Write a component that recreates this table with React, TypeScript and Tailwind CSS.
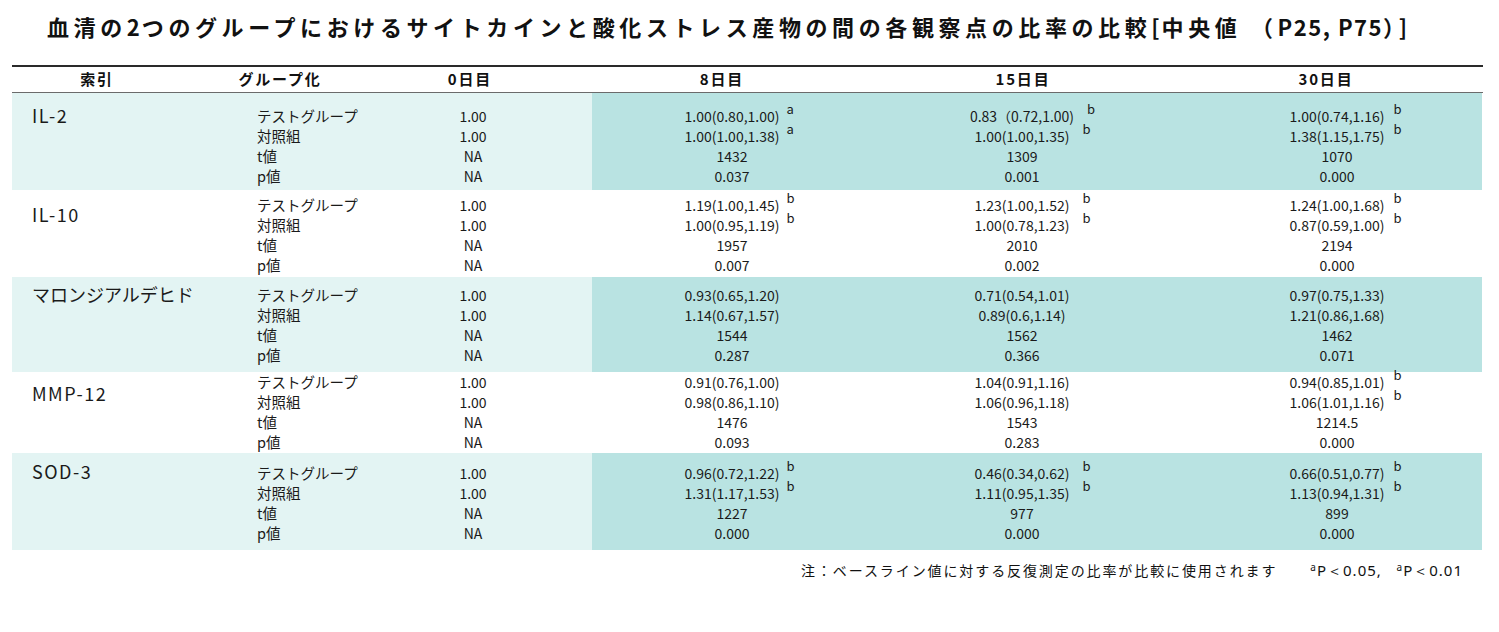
import React from 'react'

type Cell = string | [string, string]

interface Block {
  name: string
  latin: boolean
  height: string
  rowPad: string
  namePad: string
  shaded: boolean
  day0: string[]
  cols: Cell[][]
}

const GROUPS = ['テストグループ', '対照組', 't値', 'p値']

const BLOCKS: Block[] = [
  {
    name: 'IL-2',
    latin: true,
    height: 'h-[97px]',
    rowPad: 'pt-[13px]',
    namePad: 'pt-[9px]',
    shaded: true,
    day0: ['1.00', '1.00', 'NA', 'NA'],
    cols: [
      [['1.00(0.80,1.00)', 'a'], ['1.00(1.00,1.38)', 'a'], '1432', '0.037'],
      [['0.83（0.72,1.00)', 'b'], ['1.00(1.00,1.35)', 'b'], '1309', '0.001'],
      [['1.00(0.74,1.16)', 'b'], ['1.38(1.15,1.75)', 'b'], '1070', '0.000'],
    ],
  },
  {
    name: 'IL-10',
    latin: true,
    height: 'h-[87px]',
    rowPad: 'pt-[5px]',
    namePad: 'pt-[11px]',
    shaded: false,
    day0: ['1.00', '1.00', 'NA', 'NA'],
    cols: [
      [['1.19(1.00,1.45)', 'b'], ['1.00(0.95,1.19)', 'b'], '1957', '0.007'],
      [['1.23(1.00,1.52)', 'b'], ['1.00(0.78,1.23)', 'b'], '2010', '0.002'],
      [['1.24(1.00,1.68)', 'b'], ['0.87(0.59,1.00)', 'b'], '2194', '0.000'],
    ],
  },
  {
    name: 'マロンジアルデヒド',
    latin: false,
    height: 'h-[95px]',
    rowPad: 'pt-[8px]',
    namePad: 'pt-[4px]',
    shaded: true,
    day0: ['1.00', '1.00', 'NA', 'NA'],
    cols: [
      ['0.93(0.65,1.20)', '1.14(0.67,1.57)', '1544', '0.287'],
      ['0.71(0.54,1.01)', '0.89(0.6,1.14)', '1562', '0.366'],
      ['0.97(0.75,1.33)', '1.21(0.86,1.68)', '1462', '0.071'],
    ],
  },
  {
    name: 'MMP-12',
    latin: true,
    height: 'h-[81px]',
    rowPad: 'pt-[0px]',
    namePad: 'pt-[8px]',
    shaded: false,
    day0: ['1.00', '1.00', 'NA', 'NA'],
    cols: [
      ['0.91(0.76,1.00)', '0.98(0.86,1.10)', '1476', '0.093'],
      ['1.04(0.91,1.16)', '1.06(0.96,1.18)', '1543', '0.283'],
      [['0.94(0.85,1.01)', 'b'], ['1.06(1.01,1.16)', 'b'], '1214.5', '0.000'],
    ],
  },
  {
    name: 'SOD-3',
    latin: true,
    height: 'h-[97px]',
    rowPad: 'pt-[10px]',
    namePad: 'pt-[5px]',
    shaded: true,
    day0: ['1.00', '1.00', 'NA', 'NA'],
    cols: [
      [['0.96(0.72,1.22)', 'b'], ['1.31(1.17,1.53)', 'b'], '1227', '0.000'],
      [['0.46(0.34,0.62)', 'b'], ['1.11(0.95,1.35)', 'b'], '977', '0.000'],
      [['0.66(0.51,0.77)', 'b'], ['1.13(0.94,1.31)', 'b'], '899', '0.000'],
    ],
  },
]

// sup gap differs per day column in the source table
const SUP_GAP = ['ml-[7px]', 'ml-[13px]', 'ml-[9px]']
const COL_PAD = ['pl-0', 'pl-0', 'pl-[20px]']

const FONT = "font-['Noto_Sans_CJK_JP',sans-serif]"

function ValueCell({ cell, gap }: { cell: Cell; gap: string }) {
  if (typeof cell === 'string') return <span>{cell}</span>
  return (
    <span className="relative inline-block">
      {cell[0]}
      <span className={`absolute left-full top-[-7px] ${gap} text-[13px] leading-[20px]`}>
        {cell[1]}
      </span>
    </span>
  )
}

function BlockRow({ block }: { block: Block }) {
  return (
    <div
      className={`grid grid-cols-[218px_130px_232px_280px_300px_310px] ${block.height} text-[#1a1a1a]`}
    >
      <div className={`${block.shaded ? 'bg-[#e3f4f3]' : ''} pl-[20px] ${block.namePad}`}>
        <span
          className={`text-[18px] leading-[26px] ${block.latin ? 'tracking-[1.5px]' : 'tracking-[0px]'}`}
        >
          {block.name}
        </span>
      </div>
      <div className={`${block.shaded ? 'bg-[#e3f4f3]' : ''} pl-[27px] ${block.rowPad}`}>
        {GROUPS.map((g) => (
          <div key={g} className="h-[20px] text-[14.5px] leading-[20px]">
            {g}
          </div>
        ))}
      </div>
      <div className={`${block.shaded ? 'bg-[#e3f4f3]' : ''} ${block.rowPad}`}>
        {block.day0.map((v, i) => (
          <div key={i} className="h-[20px] text-center text-[14px] leading-[20px] pr-[6px]">
            {v}
          </div>
        ))}
      </div>
      {block.cols.map((col, ci) => (
        <div
          key={ci}
          className={`${block.shaded ? 'bg-[#b9e3e2]' : ''} ${block.rowPad} ${COL_PAD[ci]}`}
        >
          {col.map((cell, ri) => (
            <div key={ri} className="h-[20px] text-center text-[14px] leading-[20px]">
              <ValueCell cell={cell} gap={SUP_GAP[ci]} />
            </div>
          ))}
        </div>
      ))}
    </div>
  )
}

export default function App() {
  return (
    <div className={`w-[1499px] h-[632px] bg-white ${FONT}`}>
      {/* Title: latin bits are tighter than the kana/kanji */}
      <div className="pt-[10px] pl-[47px] h-[65px]">
        <h1 className="text-[22px] font-bold leading-[32px] tracking-[4.6px] text-[#111] whitespace-nowrap">
          血清の<span className="tracking-[2px]">2</span>つのグループにおけるサイトカインと酸化ストレス産物の間の各観察点の比率の比較<span className="tracking-[2px]">[</span>中央値 （<span className="tracking-[1.5px]">P25, P75</span>）<span>]</span>
        </h1>
      </div>

      <div className="mx-[12px] w-[1471px]">
        {/* Header */}
        <div className="border-t-2 border-b border-t-[#2a2a2a] border-b-[#6b6b6b] grid grid-cols-[170px_196px_184px_320px_282px_319px] h-[28px] items-center text-center text-[15px] font-bold tracking-[1.8px] text-[#111]">
          <div>索引</div>
          <div>グループ化</div>
          <div>0日目</div>
          <div>8日目</div>
          <div>15日目</div>
          <div className="pl-[5px]">30日目</div>
        </div>

        {BLOCKS.map((b) => (
          <BlockRow key={b.name} block={b} />
        ))}
      </div>

      {/* Footnote */}
      <div className="flex justify-end items-center gap-[33px] pr-[36px] mt-[10px] text-[#111]">
        <span className="text-[14px] tracking-[1.9px] leading-[20px]">
          注：ベースライン値に対する反復測定の比率が比較に使用されます
        </span>
        <span className="text-[15px] tracking-[1px] leading-[20px] font-['Noto_Sans',sans-serif]">
          <sup className="text-[10px]">a</sup>P＜0.05,&nbsp;&nbsp;&nbsp;<sup className="text-[10px]">a</sup>P＜0.01
        </span>
      </div>
    </div>
  )
}
